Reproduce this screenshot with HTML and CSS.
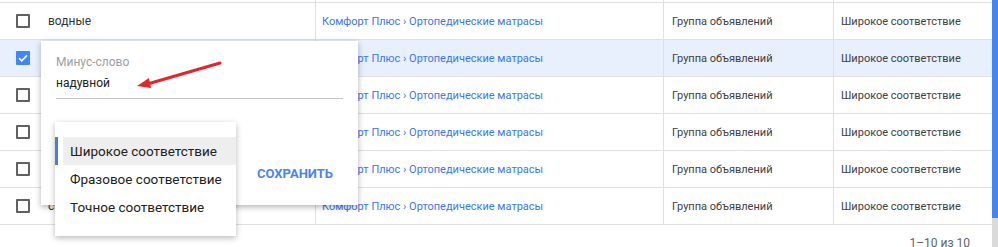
FILE: index.html
```html
<!DOCTYPE html>
<html>
<head>
    <title>Минус-слова</title>
    <link rel="stylesheet" href="styles.css">
</head>
<body>

    <div class="page">
        <div class="content">
            <div class="grid">
                <div class="row cut">
                    <div class="cell"></div><div class="cell"></div><div class="cell line"></div><div class="cell line"></div><div class="cell line"></div>
                </div>
                <div class="row">
                    <div class="cell check"><span class="box"></span></div>
                    <div class="cell word">водные</div>
                    <div class="cell line link">Комфорт Плюс › Ортопедические матрасы</div>
                    <div class="cell line">Группа объявлений</div>
                    <div class="cell line">Широкое соответствие</div>
                </div>
                <div class="row selected">
                    <div class="cell check"><span class="box on"><svg width="14" height="14" viewBox="0 0 14 14"><path d="M3 7.2l2.7 2.6L11 4.4" fill="none" stroke="#fff" stroke-width="1.6"/></svg></span></div>
                    <div class="cell word">надувной</div>
                    <div class="cell line link">Комфорт Плюс › Ортопедические матрасы</div>
                    <div class="cell line">Группа объявлений</div>
                    <div class="cell line">Широкое соответствие</div>
                </div>
                <div class="row">
                    <div class="cell check"><span class="box"></span></div>
                    <div class="cell word">детские</div>
                    <div class="cell line link">Комфорт Плюс › Ортопедические матрасы</div>
                    <div class="cell line">Группа объявлений</div>
                    <div class="cell line">Широкое соответствие</div>
                </div>
                <div class="row">
                    <div class="cell check"><span class="box"></span></div>
                    <div class="cell word">бу</div>
                    <div class="cell line link">Комфорт Плюс › Ортопедические матрасы</div>
                    <div class="cell line">Группа объявлений</div>
                    <div class="cell line">Широкое соответствие</div>
                </div>
                <div class="row">
                    <div class="cell check"><span class="box"></span></div>
                    <div class="cell word">авито</div>
                    <div class="cell line link">Комфорт Плюс › Ортопедические матрасы</div>
                    <div class="cell line">Группа объявлений</div>
                    <div class="cell line">Широкое соответствие</div>
                </div>
                <div class="row">
                    <div class="cell check"><span class="box"></span></div>
                    <div class="cell word">своими руками</div>
                    <div class="cell line link">Комфорт Плюс › Ортопедические матрасы</div>
                    <div class="cell line">Группа объявлений</div>
                    <div class="cell line">Широкое соответствие</div>
                </div>
            </div>
            <div class="pager">1–10 из 10</div>

            <!-- edit popup over the table -->
            <div class="popup">
                <div class="label">Минус-слово</div>
                <div class="value">надувной</div>
                <div class="footer">
                    <button class="save">Сохранить</button>
                </div>

                <div class="menu">
                    <div class="item active">Широкое соответствие</div>
                    <div class="item">Фразовое соответствие</div>
                    <div class="item">Точное соответствие</div>
                </div>
            </div>

            <svg class="arrow" width="100" height="40" viewBox="0 0 100 40">
                <path d="M90 8 L14 30" stroke="#e3262b" stroke-width="3" stroke-linecap="round"/>
                <path d="M7 31 L19 23 L21 33 Z" fill="#e3262b"/>
            </svg>
        </div>
        <div class="scrollbar"><div class="thumb"></div></div>
    </div>

</body>
</html>
```

FILE: styles.css
```css
body {
    margin: 0;
    font-family: "Roboto", "Liberation Sans", sans-serif;
    background-color: #fff;
    color: #3c4043;
    overflow: hidden;
}

.page {
    display: flex;
    height: 247px;
}

.content {
    flex: 1;
    position: relative;
}

.row {
    display: grid;
    grid-template-columns: 48px 267px 348px 170px 1fr;
    height: 36px;
    border-bottom: 1px solid #e0e0e0;
    font-size: 11px;
}

.row.cut {
    height: 2px;
}

.row.selected {
    background-color: #e8f0fe;
}

.cell {
    display: flex;
    align-items: center;
    white-space: nowrap;
    overflow: hidden;
}

.word {
    font-size: 12px;
    color: #333;
}

.line {
    border-left: 1px solid #e0e0e0;
    padding-left: 7px;
}

.row .cell:nth-child(4) {
    padding-left: 8px;
}

.link {
    padding-left: 6px;
    color: #3b78e7;
}

.check {
    padding-left: 16px;
}

.box {
    width: 10px;
    height: 10px;
    border: 2px solid #616161;
    border-radius: 1px;
    display: block;
}

.box.on {
    width: 14px;
    height: 14px;
    border: none;
    background-color: #4285f4;
}

.box svg {
    display: block;
}

.pager {
    display: flex;
    justify-content: flex-end;
    padding: 11px 22px 0 0;
    font-size: 12px;
    color: #5f6368;
}

.popup {
    position: absolute;
    left: 41px;
    top: 41px;
    width: 287px;
    height: 164px;
    padding: 0 15px;
    background-color: #fff;
    box-shadow: 0 2px 6px rgba(0, 0, 0, 0.3);
    box-sizing: content-box;
}

.label {
    margin-top: 14px;
    font-size: 12px;
    color: #9e9e9e;
}

.value {
    margin-top: 7px;
    padding-bottom: 8px;
    font-size: 12px;
    color: #212121;
    border-bottom: 1px solid #c4c4c4;
}

.footer {
    display: flex;
    justify-content: flex-end;
    margin-top: 67px;
    padding-right: 10px;
}

.save {
    background: none;
    border: none;
    padding: 0;
    font-family: inherit;
    font-size: 13px;
    font-weight: bold;
    text-transform: uppercase;
    color: #4a86e8;
    cursor: pointer;
}

.menu {
    position: absolute;
    left: 14px;
    top: 81px;
    width: 181px;
    padding: 15px 0;
    background-color: #fff;
    box-shadow: 0 2px 6px rgba(0, 0, 0, 0.28);
}

.item {
    height: 28px;
    display: flex;
    align-items: center;
    margin-left: 8px;
    padding-left: 7px;
    font-size: 13.5px;
    color: #212121;
    position: relative;
}

.item.active {
    background-color: #eeeeee;
}

.item.active::before {
    content: "";
    position: absolute;
    left: -8px;
    top: 0;
    width: 3px;
    height: 100%;
    background-color: #4a7ddb;
}

.arrow {
    position: absolute;
    left: 130px;
    top: 55px;
}

.scrollbar {
    width: 6px;
    background-color: #dadada;
}

.thumb {
    height: 218px;
    background-color: #4285f4;
}
```
